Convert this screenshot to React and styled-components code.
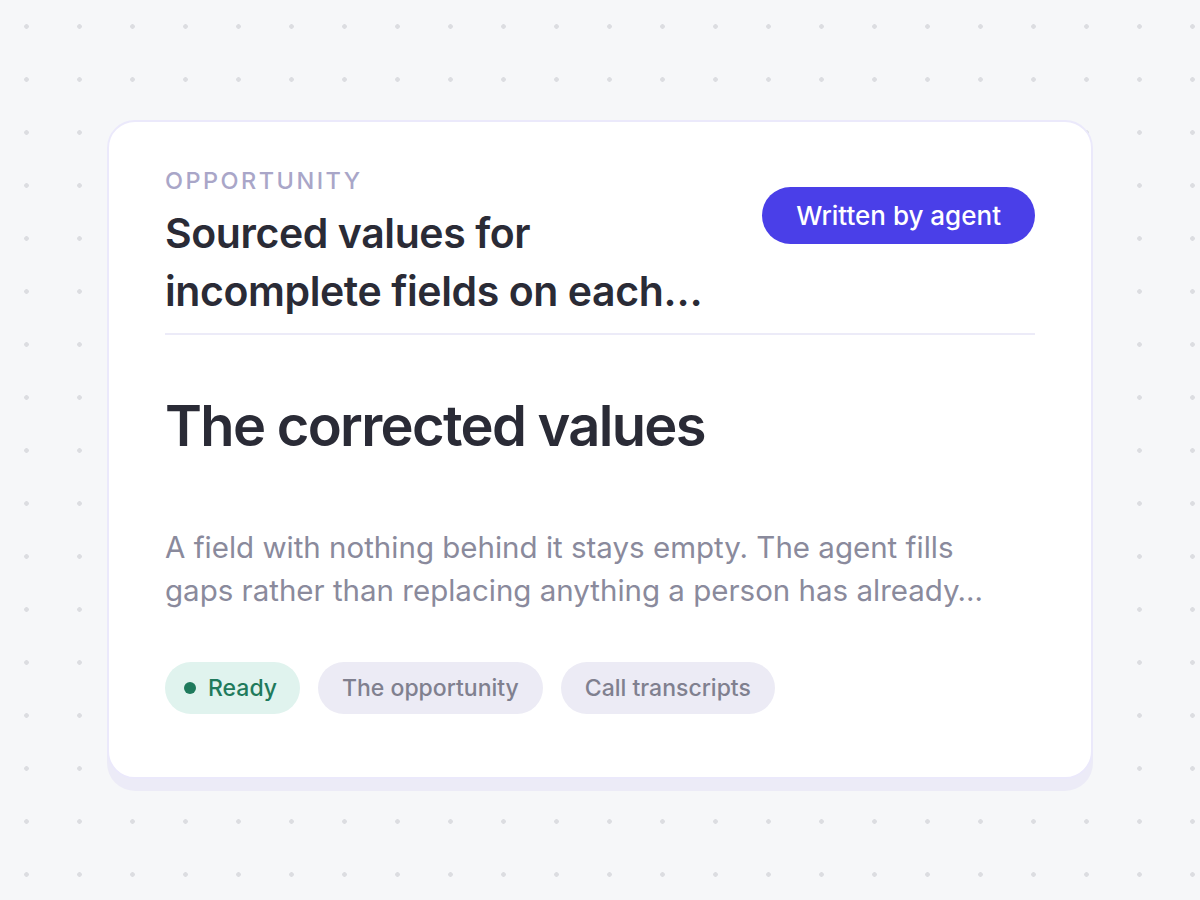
import React from "react";
import styled, { createGlobalStyle } from "styled-components";

const Global = createGlobalStyle`
  html, body { margin: 0; padding: 0; }
  body {
    font-family: "Inter", "Noto Sans", sans-serif;
    background-color: #f6f7f9;
  }
  * { box-sizing: border-box; }
`;

const Page = styled.div`
  width: 1200px;
  height: 900px;
  display: flex;
  align-items: center;
  justify-content: center;
  background-color: #f6f7f9;
  background-image: radial-gradient(circle at 26.5px 26.5px, #dcdde1 2px, transparent 2.6px);
  background-size: 53px 53px;
  background-position: 0 0;
`;

const Card = styled.div`
  width: 986px;
  height: 659px;
  margin-top: -2px;
  background: #ffffff;
  border: 2px solid #ebe9fb;
  border-radius: 28px;
  box-shadow: 0 12px 0 #ecebf7;
  padding: 45px 56px 0 56px;
  display: flex;
  flex-direction: column;
`;

const Header = styled.div`
  display: flex;
  justify-content: space-between;
  align-items: flex-start;
  padding-bottom: 13px;
  border-bottom: 2px solid #ecebf8;
`;

const HeadText = styled.div`
  display: flex;
  flex-direction: column;
`;

const Eyebrow = styled.div`
  font-size: 23.5px;
  font-weight: 500;
  letter-spacing: 0.105em;
  color: #a9a6c8;
  line-height: 28px;
`;

const Title = styled.h2`
  margin: 9px 0 0 0;
  width: 580px;
  font-size: 41px;
  font-weight: 600;
  line-height: 58px;
  color: #2a2b36;
  letter-spacing: -0.01em;
`;

const Badge = styled.div`
  margin-top: 20px;
  height: 57px;
  padding: 0 34px;
  border-radius: 29px;
  background: #4a3fe8;
  color: #ffffff;
  font-size: 26px;
  font-weight: 500;
  display: flex;
  align-items: center;
  white-space: nowrap;
`;

const Heading = styled.h1`
  margin: 56px 0 0 0;
  font-size: 56px;
  font-weight: 600;
  line-height: 70px;
  color: #2a2b36;
  letter-spacing: -0.03em;
`;

const Description = styled.p`
  margin: 65px 0 0 0;
  font-size: 29.5px;
  line-height: 43px;
  color: #8a8a9c;
  font-weight: 400;
`;

const Tags = styled.div`
  margin-top: 50px;
  display: flex;
  gap: 18px;
`;

const Tag = styled.div`
  height: 52px;
  padding: 0 ${(p) => (p.$ready ? "23px" : "24px")} 0 ${(p) => (p.$ready ? "19px" : "24px")};
  border-radius: 26px;
  display: flex;
  align-items: center;
  gap: 12px;
  font-size: 23px;
  font-weight: 500;
  background: ${(p) => (p.$ready ? "#e0f3ee" : "#ecebf5")};
  color: ${(p) => (p.$ready ? "#1f7a5c" : "#80808f")};
`;

const Dot = styled.span`
  width: 12px;
  height: 12px;
  border-radius: 50%;
  background: #1f7a5c;
`;

export default function App() {
  return (
    <>
      <Global />
      <Page>
        <Card>
          <Header>
            <HeadText>
              <Eyebrow>OPPORTUNITY</Eyebrow>
              <Title>Sourced values for incomplete fields on each…</Title>
            </HeadText>
            <Badge>Written by agent</Badge>
          </Header>
          <Heading>The corrected values</Heading>
          <Description>
            A field with nothing behind it stays empty. The agent fills
            <br />
            gaps rather than replacing anything a person has already…
          </Description>
          <Tags>
            <Tag $ready>
              <Dot />
              Ready
            </Tag>
            <Tag>The opportunity</Tag>
            <Tag>Call transcripts</Tag>
          </Tags>
        </Card>
      </Page>
    </>
  );
}
